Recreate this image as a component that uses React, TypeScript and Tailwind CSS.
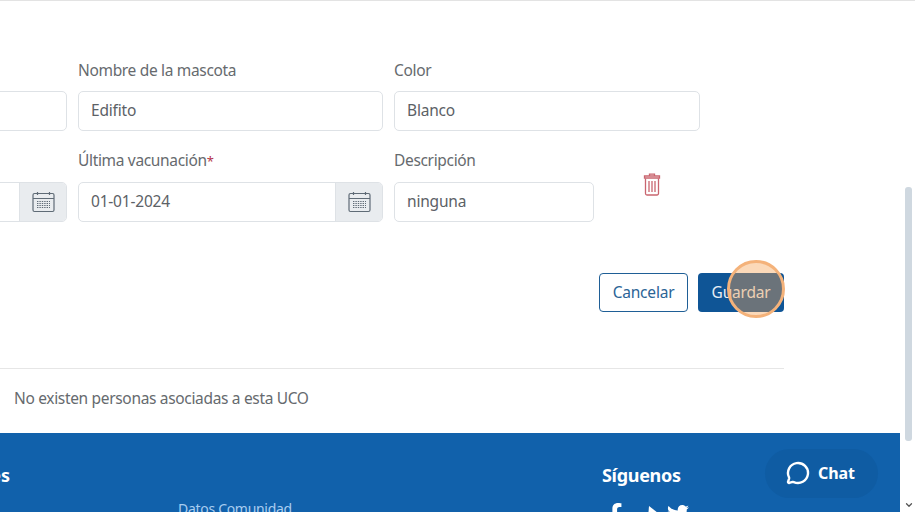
import { MessageCircle, ChevronDown } from 'lucide-react'
import { FaFacebookF, FaTwitter } from 'react-icons/fa'

function CalendarIcon() {
  return (
    <svg width="23" height="22" viewBox="0 0 23 22" fill="none" stroke="#5f6b76" strokeWidth="1.2">
      <rect x="1" y="2.5" width="21" height="18" rx="1.5" />
      <path d="M1 7.5h21M5.5 1v3M17.5 1v3" />
      <path d="M5 10.5h13M5 12.5h13M5 14.5h13M5 16.5h13" strokeDasharray="1.4 1" />
    </svg>
  )
}

function TrashIcon() {
  return (
    <svg width="18" height="23" viewBox="0 0 18 23" fill="none" stroke="#c9656f" strokeWidth="1.3">
      <path d="M6.5 3V1.2h5V3M1.5 3h15v2h-15z" />
      <path d="M2.5 5.5v15a1.5 1.5 0 0 0 1.5 1.5h10a1.5 1.5 0 0 0 1.5-1.5v-15" />
      <path d="M6 8v11M9 8v11M12 8v11" />
    </svg>
  )
}

function Field({ label, value, required, date, width, lower }: { label?: string; value?: string; required?: boolean; date?: boolean; width?: string; lower?: boolean }) {
  return (
    <div className={width}>
      <label className={`block h-6 text-[15.5px] leading-6 text-[#666a6e] tracking-[-0.33px] ${lower ? 'mb-[10px]' : 'mb-[9px]'}`}>
        {label}
        {required && <span className="text-[#b5344a] text-[13px]">*</span>}
      </label>
      <div className="flex h-[40px] rounded-[5px] border border-[#dee2e6] bg-white overflow-hidden">
        <div className="flex-1 px-3 flex items-center text-[15.5px] text-[#5c6166] tracking-[-0.2px]">{value}</div>
        {date && (
          <div className="w-[47px] flex items-center justify-center bg-[#e9ecef] border-l border-[#dee2e6]">
            <CalendarIcon />
          </div>
        )}
      </div>
    </div>
  )
}

export default function App() {
  return (
    <div className="relative h-[512px] w-[915px] overflow-hidden bg-white border-t border-[#e3e3e3] flex font-['Noto_Sans',sans-serif]">
      <div className="w-[900px] shrink-0 flex flex-col">
        {/* Form */}
        <div className="h-[432px] flex flex-col pt-[57px]">
          <div className="grid grid-cols-[305px_305px_306px] gap-x-[11px] gap-y-[17px] ml-[-238px]">
            <Field />
            <Field label="Nombre de la mascota" value="Edifito" />
            <Field label="Color" value="Blanco" />
            <Field date lower />
            <Field label="Última vacunación" value="01-01-2024" required date lower />
            <div className="flex">
              <Field label="Descripción" value="ninguna" width="w-[200px]" lower />
              <div className="ml-[49px] mt-[25px]">
                <TrashIcon />
              </div>
            </div>
          </div>

          <div className="w-[784px] flex justify-end gap-[10px] mt-[51px]">
            <button className="w-[89px] h-[39px] rounded-[4px] border border-[#1f5f96] text-[#2b6496] text-[15.5px] tracking-[-0.2px]">Cancelar</button>
            <button className="w-[86px] h-[39px] rounded-[4px] bg-[#0f5596] text-[#e8eef4] text-[15.5px] tracking-[-0.2px]">Guardar</button>
          </div>

          <div className="w-[784px] border-t border-[#e6e6e6] mt-[56px] pl-[14px] pt-[17px] text-[15.5px] leading-6 text-[#666a6e] tracking-[-0.33px]">
            No existen personas asociadas a esta UCO
          </div>
        </div>

        {/* Footer */}
        <footer className="flex-1 bg-[#1161ab] grid grid-cols-[178px_424px_1fr] pt-[30px] overflow-hidden">
          <div className="text-[18px] leading-6 font-bold text-white flex justify-end w-[10px]">
            <span className="whitespace-nowrap">Enlaces</span>
          </div>
          <div className="pt-[34px] text-[14px] leading-6 text-[#a9cdf0] tracking-[-0.3px]">Datos Comunidad</div>
          <div>
            <div className="text-[18px] leading-6 font-bold text-white tracking-[-0.3px]">Síguenos</div>
            <div className="flex items-start mt-[16px] pl-[1px] text-white">
              <FaFacebookF size={24} />
              <svg width="10" height="12" viewBox="0 0 10 12" className="ml-[21px] mt-[3px]" fill="currentColor">
                <path d="M1 0L10 7V12H0z" />
              </svg>
              <FaTwitter size={22} className="ml-[9px]" />
            </div>
          </div>
        </footer>
      </div>

      {/* Scrollbar */}
      <div className="flex-1 flex flex-col items-center pt-[186px]">
        <div className="w-[7px] h-[254px] rounded-[3px] bg-[#cfd8e0] ml-[2px]" />
        <ChevronDown size={10} strokeWidth={3} className="mt-auto mb-[2px] ml-[2px] text-[#555]" />
      </div>

      {/* Chat bubble */}
      <div className="absolute left-[765px] top-[448px] w-[113px] h-[49px] rounded-full bg-[#0f5ca3] flex items-center justify-center gap-[8px] pr-[2px] pb-[2px] text-white">
        <MessageCircle size={24} strokeWidth={2.4} />
        <span className="text-[16px] font-bold tracking-[-0.1px]">Chat</span>
      </div>

      {/* Click highlight */}
      <div className="absolute left-[727px] top-[259px] w-[58px] h-[58px] rounded-full border-[3px] border-[#f4b27a] bg-[#f5a050]/40" />
    </div>
  )
}
